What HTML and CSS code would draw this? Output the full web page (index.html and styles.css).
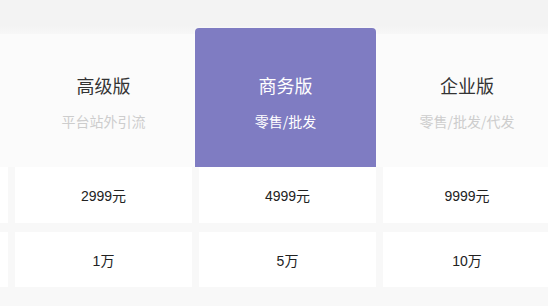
FILE: index.html
```html
<!DOCTYPE html>
<html lang="zh">
<head>
<meta charset="utf-8">
<link rel="stylesheet" href="styles.css">
</head>
<body>
<div class="page">
  <div class="top"></div>
  <div class="grid head-row">
    <div class="head"></div>
    <div class="head">
      <div class="title">高级版</div>
      <div class="sub">平台站外引流</div>
    </div>
    <div class="head featured">
      <div class="title">商务版</div>
      <div class="sub">零售/批发</div>
    </div>
    <div class="head">
      <div class="title">企业版</div>
      <div class="sub">零售/批发/代发</div>
    </div>
  </div>
  <div class="grid row">
    <div class="cell"></div>
    <div class="cell">2999元</div>
    <div class="cell">4999元</div>
    <div class="cell">9999元</div>
  </div>
  <div class="grid row second">
    <div class="cell"></div>
    <div class="cell">1万</div>
    <div class="cell">5万</div>
    <div class="cell">10万</div>
  </div>
</div>
</body>
</html>
```
FILE: styles.css
```css
html, body {
  margin: 0;
  padding: 0;
  background: #f8f8f8;
  overflow: hidden;
}
body {
  font-family: "Noto Sans CJK SC", "Liberation Sans", sans-serif;
  color: #333;
}
.page {
  width: 548px;
  height: 306px;
  overflow: hidden;
}
.top {
  height: 34px;
  background: linear-gradient(#f3f3f3 0, #f3f3f3 26px, #f7f7f7 34px);
}
.grid {
  display: grid;
  grid-template-columns: 177px 177px 177px 168px;
  column-gap: 7px;
  margin-left: -169px;
  width: 720px;
}
.head-row {
  height: 133px;
  background: #fbfbfb;
  align-items: stretch;
}
.head {
  text-align: center;
  padding-top: 39px;
}
.title {
  font-size: 18px;
  line-height: 24px;
  color: #333;
}
.sub {
  margin-top: 14px;
  font-size: 14px;
  line-height: 20px;
  color: #cdcdcd;
}
.featured {
  background: #7f7cc2;
  margin-top: -6px;
  margin-left: -4px;
  padding-top: 45px;
  border-radius: 4px 4px 0 0;
  box-shadow: 0 0 3px rgba(255,255,255,0.9);
}
.featured .title,
.featured .sub {
  color: #fff;
}
.row {
  background: #f8f8f8;
  height: 56px;
}
.row.second {
  margin-top: 9px;
  height: 55px;
}
.cell {
  background: #fff;
  display: flex;
  align-items: center;
  justify-content: center;
  font-family: "Liberation Sans", "Noto Sans CJK SC", sans-serif;
  font-size: 14px;
  color: #222;
}
```
